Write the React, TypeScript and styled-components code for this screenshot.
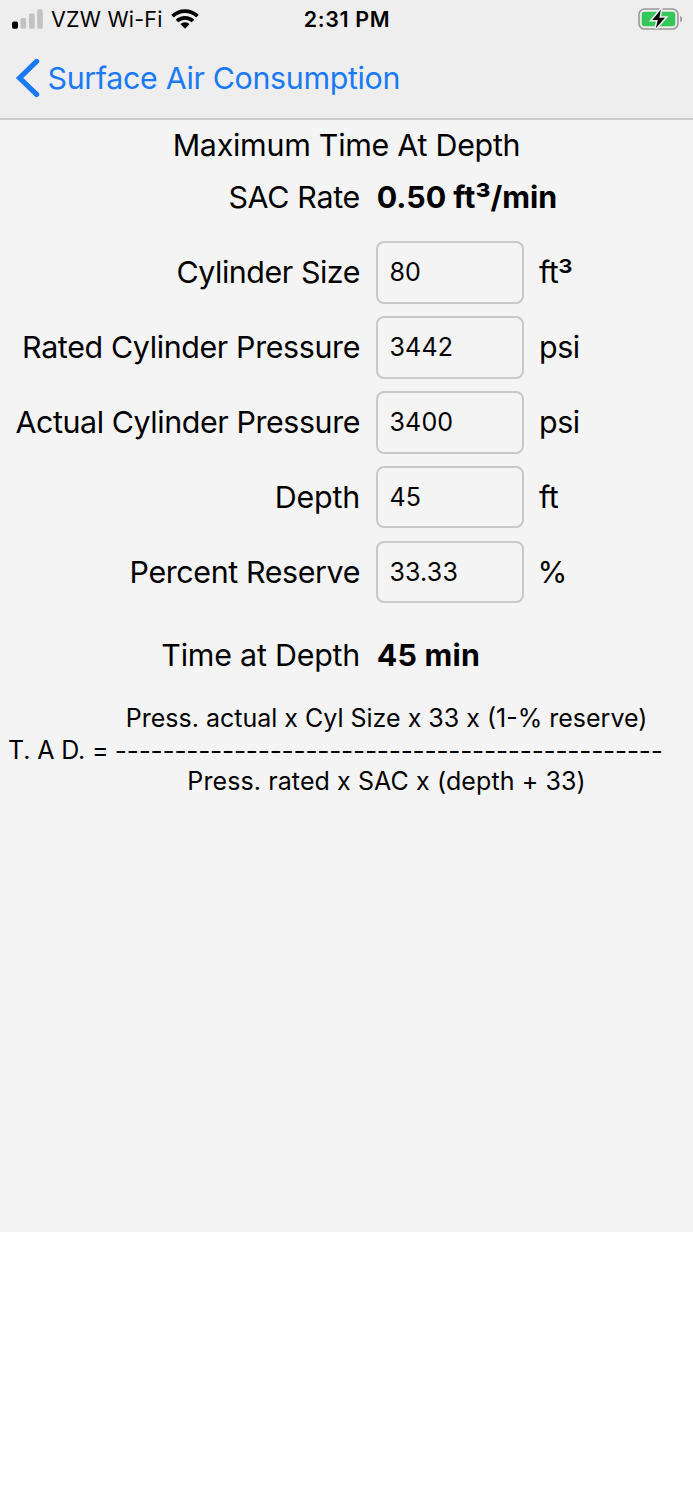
import React, { useState } from "react";
import styled, { createGlobalStyle } from "styled-components";

const GlobalStyle = createGlobalStyle`
  * { box-sizing: border-box; }
  body { margin: 0; background: #fff; font-family: Inter, "Liberation Sans", sans-serif; color: #000; }
`;

const Screen = styled.div`
  height: 1232px;
  background: #f4f4f4;
  overflow: hidden;
`;

const Header = styled.header`
  height: 120px;
  background: #eeeeee;
  border-bottom: 2px solid #cbcbcb;
`;

const StatusBar = styled.div`
  display: grid;
  grid-template-columns: 1fr auto 1fr;
  align-items: center;
  height: 38px;
  padding: 0 11px 0 12px;
`;

const Carrier = styled.div`
  display: flex;
  align-items: center;
  gap: 8px;
  svg { flex: none; }
`;

const StatusText = styled.span<{ $weight?: number; $track?: number }>`
  font-size: 21.5px;
  line-height: 38px;
  white-space: nowrap;
  font-weight: ${(p) => p.$weight ?? 400};
  letter-spacing: ${(p) => p.$track ?? 0}px;
`;

const BatterySlot = styled.div`
  display: flex;
  justify-content: flex-end;
  margin-right: -1px;
`;

const BackLink = styled.a`
  display: flex;
  align-items: center;
  height: 80px;
  padding-left: 15px;
  color: #1a7af5;
`;

const Label = styled.span<{ $track?: number; $bold?: boolean }>`
  font-size: 30.4px;
  line-height: 38px;
  white-space: nowrap;
  font-weight: ${(p) => (p.$bold ? 700 : 400)};
  letter-spacing: ${(p) => p.$track ?? 0}px;
`;

const Cubed = styled.span`
  font-size: 1.12em;
  line-height: 0;
  vertical-align: -4.5px;
  margin: 0 -0.5px;
`;

const Percent = styled.span`
  margin-left: -1.5px;
`;

const BackLabel = styled(Label)`
  margin-left: 7.5px;
`;

const Result = styled(Label)`
  padding-left: 0.7px;
`;

const Title = styled.h1`
  margin: 5.7px 0 0;
  height: 38px;
  font-weight: 400;
  font-size: 30.4px;
  line-height: 38px;
  letter-spacing: -0.26px;
  text-align: center;
`;

const Row = styled.div<{ $top?: number; $height?: number }>`
  display: grid;
  grid-template-columns: 360px 147px 1fr;
  column-gap: 16px;
  align-items: center;
  height: ${(p) => p.$height ?? 62.8}px;
  margin-top: ${(p) => p.$top ?? 12}px;
  > :first-child { justify-self: end; }
`;

const Field = styled.input`
  width: 148px;
  height: 62.8px;
  padding: 0 0 0 11.5px;
  border: 2px solid #c8c8c8;
  border-radius: 8px;
  background: transparent;
  color: #000;
  font: 400 25px Inter, "Liberation Sans", sans-serif;
  letter-spacing: 0.15px;
  outline: none;
`;

const Formula = styled.div`
  display: flex;
  align-items: center;
  margin-top: 28.8px;
  padding-left: 8px;
  font-size: 25px;
`;

const Fraction = styled.div`
  display: flex;
  flex-direction: column;
  align-items: center;
  width: 546px;
  margin-left: 7.3px;
`;

const Term = styled.span<{ $track?: number }>`
  line-height: 31.5px;
  white-space: nowrap;
  letter-spacing: ${(p) => p.$track ?? 0}px;
`;

const Subject = styled(Term)`
  padding-top: 1.6px;
`;

const Operand = styled(Term)`
  padding-right: 4.4px;
`;

const Divider = styled(Term)`
  height: 31.5px;
  font-size: 26.4px;
  line-height: 31px;
`;

const Signal = () => (
  <svg width="31" height="20" viewBox="0 0 31 20">
    <rect x="0" y="12.5" width="6" height="7.3" rx="1.8" fill="#000" />
    <rect x="8.5" y="9" width="5.7" height="10.8" rx="1.6" fill="#c2c2c2" />
    <rect x="17" y="4.5" width="5.7" height="15.3" rx="1.6" fill="#c2c2c2" />
    <rect x="25.2" y="0.3" width="5.6" height="19.5" rx="1.6" fill="#c2c2c2" />
  </svg>
);

const Wifi = () => (
  <svg width="28" height="20" viewBox="0 0 28 20">
    <g fill="none" stroke="#000" strokeWidth="3.7">
      <path d="M1.5 7.1a18 18 0 0 1 25 0" />
      <path d="M6 12a11.6 11.6 0 0 1 16 0" />
    </g>
    <path d="M14 19.7 9.4 15.1a6.5 6.5 0 0 1 9.2 0Z" fill="#000" />
  </svg>
);

const Battery = () => (
  <svg width="45" height="22" viewBox="0 0 45 22">
    <rect x="1" y="1" width="39" height="20" rx="5.5" fill="none" stroke="#999" strokeWidth="1.6" />
    <rect x="3.7" y="3.7" width="33.6" height="14.6" rx="3" fill="#35c759" />
    <path d="M42.2 7.4q2 1.2 2 3.6t-2 3.6Z" fill="#999" />
    <path d="M22.8 1.7 14.3 12h5.5l-2 8.3 9.2-10.5h-5.6Z" fill="#000" stroke="#eee" strokeWidth="3.2" paintOrder="stroke" />
  </svg>
);

const BackChevron = () => (
  <svg width="25" height="40" viewBox="0 0 25 40">
    <path d="M21.6 3.4 4.6 20l17 16.4" fill="none" stroke="#1a7af5" strokeWidth="5.2" strokeLinecap="round" strokeLinejoin="miter" />
  </svg>
);

const inputs = [
  { label: "Cylinder Size", value: "80", unit: <>ft<Cubed>³</Cubed></>, track: -0.45 },
  { label: "Rated Cylinder Pressure", value: "3442", unit: "psi", track: -0.36 },
  { label: "Actual Cylinder Pressure", value: "3400", unit: "psi", track: -0.41 },
  { label: "Depth", value: "45", unit: "ft", track: -0.2 },
  { label: "Percent Reserve", value: "33.33", unit: <Percent>%</Percent>, track: -0.38 },
];

export default function App() {
  const [values, setValues] = useState(inputs.map((i) => i.value));
  return (
    <>
      <GlobalStyle />
      <Screen>
        <Header>
          <StatusBar>
            <Carrier>
              <Signal />
              <StatusText $track={0.2}>VZW Wi-Fi</StatusText>
              <Wifi />
            </Carrier>
            <StatusText $weight={600} $track={0.65}>2:31 PM</StatusText>
            <BatterySlot>
              <Battery />
            </BatterySlot>
          </StatusBar>
          <BackLink>
            <BackChevron />
            <BackLabel $track={-0.34}>Surface Air Consumption</BackLabel>
          </BackLink>
        </Header>
        <Title>Maximum Time At Depth</Title>
        <Row $top={14.3} $height={38}>
          <Label $track={-0.3}>SAC Rate</Label>
          <Result $bold>0.50 ft<Cubed>³</Cubed>/min</Result>
        </Row>
        {inputs.map((item, i) => (
          <Row key={item.label} $top={i === 0 ? 25 : 12.1}>
            <Label $track={item.track}>{item.label}</Label>
            <Field
              aria-label={item.label}
              value={values[i]}
              onChange={(e) => setValues(values.map((v, n) => (n === i ? e.target.value : v)))}
            />
            <Label $track={-0.4}>{item.unit}</Label>
          </Row>
        ))}
        <Row $top={33} $height={38}>
          <Label $track={-0.22}>Time at Depth</Label>
          <Result $bold $track={0.25}>45 min</Result>
        </Row>
        <Formula>
          <Subject $track={-0.12}>T. A D. =</Subject>
          <Fraction>
            <Operand>Press. actual x Cyl Size x 33 x (1-% reserve)</Operand>
            <Divider $track={-0.23}>{"-".repeat(46)}</Divider>
            <Operand $track={0.1}>Press. rated x SAC x (depth + 33)</Operand>
          </Fraction>
        </Formula>
      </Screen>
    </>
  );
}
